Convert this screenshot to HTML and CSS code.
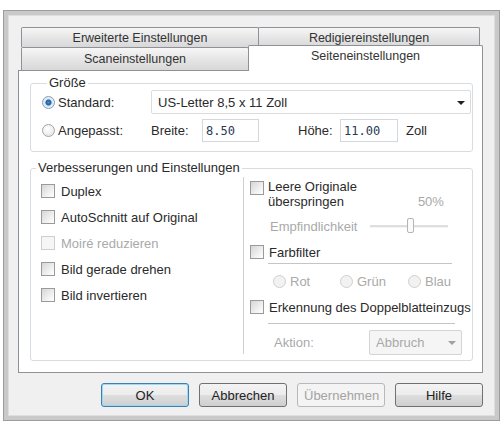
FILE: index.html
```html
<!DOCTYPE html>
<html lang="de">
<head>
    <meta charset="UTF-8">
    <title>Seiteneinstellungen</title>
    <link rel="stylesheet" href="styles.css">
</head>
<body>
    <div class="window">
        <div class="tabs">
            <div class="tab-row back">
                <div class="tab t-erw">Erweiterte Einstellungen</div>
                <div class="tab t-red">Redigiereinstellungen</div>
            </div>
            <div class="tab-row front">
                <div class="tab t-scan">Scaneinstellungen</div>
                <div class="tab active">Seiteneinstellungen</div>
            </div>
        </div>

        <div class="panel">
            <fieldset class="group size">
                <legend>Größe</legend>
                <div class="row first">
                    <label class="opt"><span class="radio on"></span>Standard:</label>
                    <div class="combo">US-Letter 8,5 x 11 Zoll<span class="arrow"></span></div>
                </div>
                <div class="row second">
                    <label class="opt"><span class="radio"></span>Angepasst:</label>
                    <span class="lbl-breite">Breite:</span>
                    <span class="field f-breite">8.50</span>
                    <span class="lbl-hoehe">Höhe:</span>
                    <span class="field f-hoehe">11.00</span>
                    <span class="unit">Zoll</span>
                </div>
            </fieldset>

            <fieldset class="group enh">
                <legend>Verbesserungen und Einstellungen</legend>
                <div class="cols">
                    <div class="col left">
                        <div class="check-row"><span class="box"></span>Duplex</div>
                        <div class="check-row"><span class="box"></span>AutoSchnitt auf Original</div>
                        <div class="check-row disabled"><span class="box"></span>Moiré reduzieren</div>
                        <div class="check-row"><span class="box"></span>Bild gerade drehen</div>
                        <div class="check-row"><span class="box"></span>Bild invertieren</div>
                    </div>
                    <div class="col right">
                        <div class="blank-row">
                            <span class="box"></span>
                            <span class="two-line">Leere Originale<br>überspringen</span>
                            <span class="pct">50%</span>
                        </div>
                        <div class="sens-row">
                            <span class="sens-label">Empfindlichkeit</span>
                            <div class="slider"><span class="thumb"></span></div>
                        </div>
                        <div class="r-row filter"><span class="box"></span>Farbfilter</div>
                        <div class="rule"></div>
                        <div class="colors">
                            <span class="c-item rot"><span class="radio"></span>Rot</span>
                            <span class="c-item gruen"><span class="radio"></span>Grün</span>
                            <span class="c-item"><span class="radio"></span>Blau</span>
                        </div>
                        <div class="r-row double"><span class="box"></span>Erkennung des Doppelblatteinzugs</div>
                        <div class="rule rule2"></div>
                        <div class="action-row">
                            <span class="action-label">Aktion:</span>
                            <div class="combo small">Abbruch<span class="arrow"></span></div>
                        </div>
                    </div>
                </div>
            </fieldset>
        </div>

        <div class="buttons">
            <button class="btn focus">OK</button>
            <button class="btn">Abbrechen</button>
            <button class="btn" disabled>Übernehmen</button>
            <button class="btn">Hilfe</button>
        </div>
    </div>
</body>
</html>
```

FILE: styles.css
```css
body {
    margin: 0;
    background: #fff;
    font-family: "Liberation Sans", Arial, sans-serif;
    font-size: 13px;
    color: #2a2a2a;
}
.window {
    box-sizing: border-box;
    width: 497px;
    height: 411px;
    margin: 10px 0 0 3px;
    border: 1px solid #9d9d9d;
    box-shadow: inset 0 0 0 4px #c9c9c9, inset 0 0 0 5px #dedede;
    background: #f0f0f0;
    padding: 16px 12px 0 14px;
}

/* tabs */
.tabs {
    margin-left: 3px;
}
.tab-row {
    display: flex;
}
.tab {
    box-sizing: border-box;
    display: flex;
    align-items: center;
    justify-content: center;
    border: 1px solid #8e9197;
    border-bottom: none;
    border-radius: 2px 2px 0 0;
    background: linear-gradient(#f6f6f6, #e6e6e6 50%, #d8d8d8);
    font-size: 12.5px;
    color: #333;
}
.back .tab {
    height: 20px;
}
.t-erw {
    width: 238px;
}
.t-red {
    width: 222px;
    margin-left: -1px;
}
.front {
    height: 23px;
}
.t-scan {
    width: 228px;
    height: 23px;
}
.tab.active {
    position: relative;
    z-index: 1;
    width: 235px;
    height: 26px;
    margin: -2px 0 0 -1px;
    padding-bottom: 6px;
    background: #fff;
}

/* panel */
.panel {
    box-sizing: border-box;
    width: 465px;
    height: 303px;
    border: 1px solid #8e9197;
    background: #fff;
    padding: 5px 9px 0 11px;
}
.group {
    margin: 0;
    min-width: 0;
    border: 1px solid #d5dde3;
    border-radius: 3px;
}
.group legend {
    margin-left: 5px;
    padding: 0 2px;
    line-height: 14px;
}
.size {
    padding: 0 0 9px 11px;
}
.row {
    display: flex;
    align-items: center;
}
.row.first {
    height: 24px;
}
.row.second {
    height: 23px;
    margin-top: 5px;
}
.opt {
    display: flex;
    align-items: center;
    gap: 3px;
    width: 109px;
}
.radio {
    box-sizing: border-box;
    display: inline-block;
    width: 13px;
    height: 13px;
    border: 1px solid #a2a4a6;
    border-radius: 50%;
    background: radial-gradient(circle at 40% 35%, #fff, #e0e0e0);
}
.radio.on {
    border-color: #7f9db9;
    background: radial-gradient(circle, #4a8ccb 0, #1f5f9c 2.5px, #d7e6f3 3.5px, #eef3f8 6px);
}
.combo {
    box-sizing: border-box;
    position: relative;
    display: flex;
    align-items: center;
    width: 320px;
    height: 24px;
    padding-left: 6px;
    border: 1px solid #dcdcdc;
    border-radius: 2px;
    background: #fff;
}
.arrow {
    position: absolute;
    right: 5px;
    top: 10px;
    border-left: 4px solid transparent;
    border-right: 4px solid transparent;
    border-top: 4px solid #222;
}
.lbl-breite {
    width: 51px;
}
.field {
    box-sizing: border-box;
    display: flex;
    align-items: center;
    height: 23px;
    padding-left: 3px;
    border: 1px solid #d3d8de;
    background: #fff;
    font-family: "DejaVu Sans Mono", monospace;
    font-size: 12px;
    color: #2a3a55;
}
.f-breite {
    width: 57px;
}
.lbl-hoehe {
    width: 42px;
    margin-left: 39px;
}
.f-hoehe {
    width: 58px;
}
.unit {
    margin-left: 8px;
}

/* enhancements */
.enh {
    margin-top: 9px;
    padding: 2px 0 6px 0;
}
.cols {
    display: flex;
    height: 177px;
}
.col.left {
    box-sizing: border-box;
    width: 213px;
    padding: 1px 0 0 10px;
    border-right: 1px solid #ccd1d6;
}
.check-row {
    display: flex;
    align-items: center;
    gap: 6px;
    height: 26px;
}
.box {
    box-sizing: border-box;
    flex: none;
    display: inline-block;
    width: 14px;
    height: 14px;
    border: 1px solid #9a9a9a;
    background: linear-gradient(135deg, #d6d6d6, #f4f4f4 70%, #fff);
}
.disabled {
    color: #a9a9a9;
}
.disabled .box {
    border-color: #cfcfcf;
    background: #f6f6f6;
}
.col.right {
    flex: 1;
    padding: 2px 0 0 6px;
}
.blank-row {
    display: flex;
    height: 30px;
}
.blank-row .box {
    margin-top: 2px;
}
.two-line {
    margin-left: 4px;
    line-height: 15px;
}
.pct {
    align-self: flex-end;
    margin-left: 61px;
    color: #a9a9a9;
}
.sens-row {
    display: flex;
    align-items: center;
    height: 16px;
    margin: 9px 0 0 20px;
    color: #a9a9a9;
}
.sens-label {
    width: 100px;
}
.slider {
    position: relative;
    width: 78px;
    height: 2px;
    background: #dedede;
    border-bottom: 1px solid #f4f4f4;
}
.thumb {
    position: absolute;
    left: 37px;
    top: -7px;
    box-sizing: border-box;
    width: 7px;
    height: 15px;
    border: 1px solid #b5b5b5;
    border-radius: 2px;
    background: #fafafa;
}
.r-row {
    display: flex;
    align-items: center;
    gap: 5px;
    height: 16px;
}
.filter {
    margin-top: 10px;
}
.rule {
    width: 184px;
    height: 1px;
    margin: 3px 0 0 18px;
    background: #c2c6ca;
}
.colors {
    display: flex;
    align-items: center;
    height: 16px;
    margin: 9px 0 0 23px;
    color: #a9a9a9;
}
.c-item {
    display: flex;
    align-items: center;
    gap: 4px;
}
.c-item .radio {
    border-color: #cfcfcf;
    background: #f2f2f2;
}
.rot {
    width: 67px;
}
.gruen {
    width: 68px;
}
.double {
    margin-top: 10px;
}
.rule2 {
    width: 187px;
    margin-top: 8px;
}
.action-row {
    display: flex;
    align-items: center;
    margin: 6px 0 0 24px;
    color: #a9a9a9;
}
.action-label {
    width: 95px;
}
.combo.small {
    width: 93px;
    height: 25px;
    border-color: #d4d4d4;
    background: #f5f5f5;
}
.combo.small .arrow {
    border-top-color: #a0a0a0;
}

/* buttons */
.buttons {
    display: flex;
    justify-content: flex-end;
    gap: 10px;
    width: 465px;
    margin-top: 10px;
}
.btn {
    box-sizing: border-box;
    width: 88px;
    height: 24px;
    border: 1px solid #707070;
    border-radius: 3px;
    background: linear-gradient(#f3f3f3, #ececec 48%, #dddddd 52%, #cfcfcf);
    font-family: "Liberation Sans", Arial, sans-serif;
    font-size: 13px;
    color: #222;
}
.btn.focus {
    border-color: #3c7fb1;
    box-shadow: inset 0 0 0 1px #9ed9f3;
}
.btn:disabled {
    border-color: #b5b9bc;
    background: #f4f4f4;
    color: #a3a3a3;
}
```
